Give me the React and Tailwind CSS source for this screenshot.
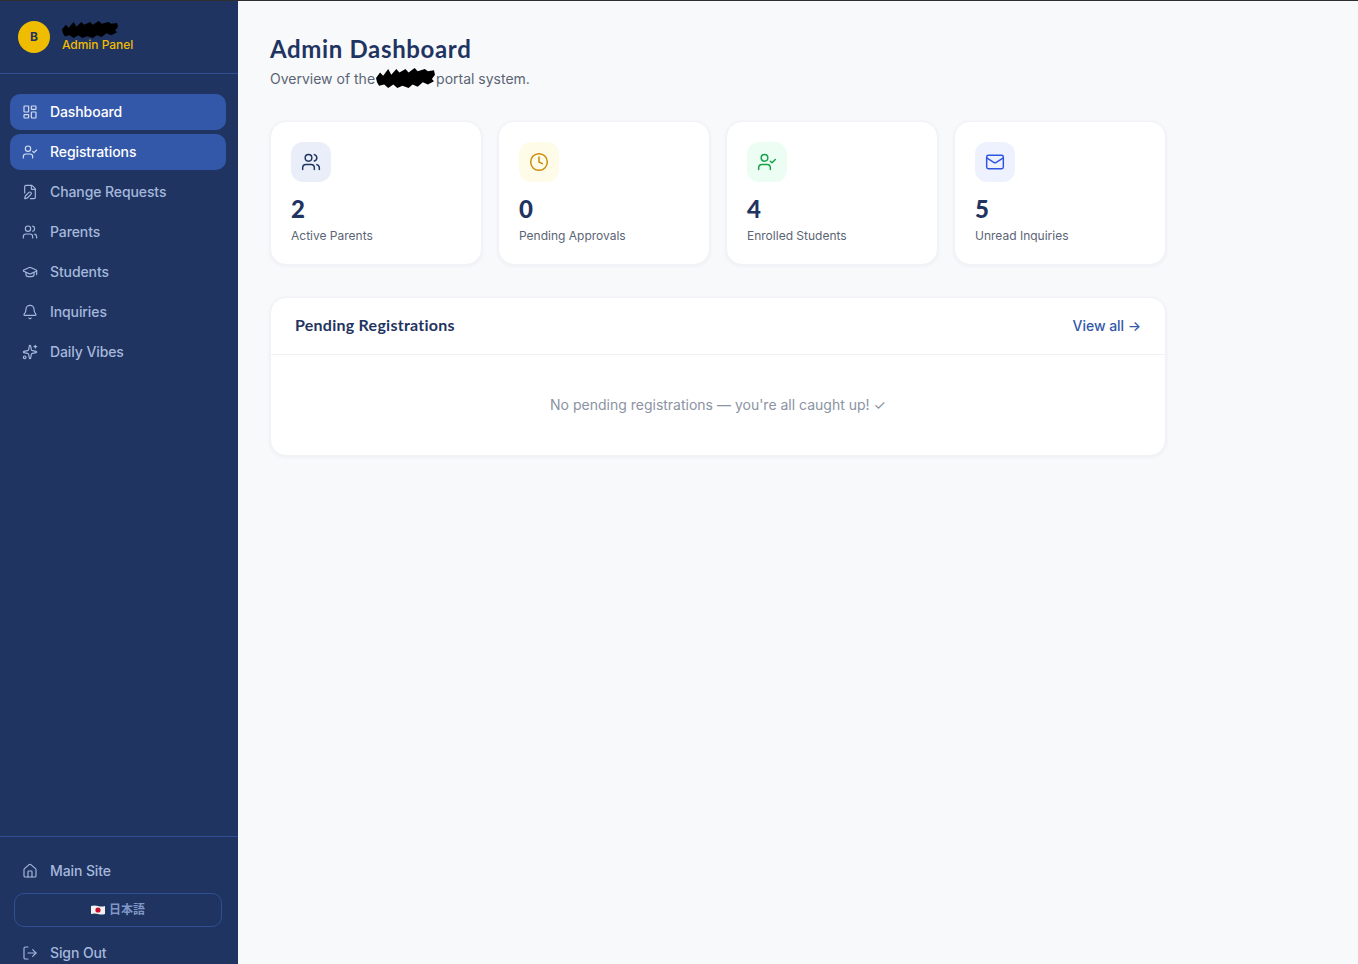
import { LayoutDashboard, UserCheck, FilePen, Users, GraduationCap, Bell, Sparkles, House, LogOut, Clock, Mail } from 'lucide-react';

const navItems = [
  { label: 'Dashboard', icon: LayoutDashboard, active: true },
  { label: 'Registrations', icon: UserCheck, active: true },
  { label: 'Change Requests', icon: FilePen },
  { label: 'Parents', icon: Users },
  { label: 'Students', icon: GraduationCap },
  { label: 'Inquiries', icon: Bell },
  { label: 'Daily Vibes', icon: Sparkles },
];

const SCRIBBLE = 'M1 9 L5 4 L8 7 L13 1 L16 6 L21 1 L24 4 L30 1 L33 4 L39 0 L42 3 L49 1 L52 3 L58 2 L59 6 L56 10 L58 12 L52 15 L47 13 L42 17 L37 15 L33 18 L27 16 L22 18 L18 15 L13 18 L9 15 L4 16 L2 13 Z';

const Scribble = ({ className }) => (
  <svg className={className} viewBox="0 0 60 19" preserveAspectRatio="none" fill="#000" aria-hidden="true">
    <path d={SCRIBBLE} />
  </svg>
);

const stats = [
  { value: '2', label: 'Active Parents', icon: Users, box: 'bg-[#e9eef8]', color: 'text-[#1f3461]' },
  { value: '0', label: 'Pending Approvals', icon: Clock, box: 'bg-[#fefce8]', color: 'text-[#ca8a04]' },
  { value: '4', label: 'Enrolled Students', icon: UserCheck, box: 'bg-[#ecfdf3]', color: 'text-[#16a34a]' },
  { value: '5', label: 'Unread Inquiries', icon: Mail, box: 'bg-[#eef2ff]', color: 'text-[#2f55e0]' },
];

const NavLink = ({ label, icon: Icon, active }) => (
  <a className={`flex h-9 shrink-0 items-center gap-3 rounded-[10px] px-3 text-sm font-medium tracking-[-0.1px] ${active ? 'bg-[#3358aa] text-white' : 'text-[#a5b8dc]'}`}>
    <Icon size={16} strokeWidth={1.75} className={active ? 'text-[#d5deef]' : 'text-[#a5b8dc]'} />
    {label}
  </a>
);

const JapanFlag = () => (
  <svg width="14" height="10" viewBox="0 0 14 10" aria-hidden="true">
    <path d="M0 1 Q3.5 0 7 1 T14 1 V9 Q10.5 10 7 9 T0 9 Z" fill="#f1f1f1" />
    <circle cx="7" cy="5" r="2.6" fill="#c8102e" />
  </svg>
);

const App = () => {
  return (
    <div className="flex h-screen overflow-hidden border-t border-[#2e2e2e] bg-[#f8f9fb] font-['Inter',sans-serif]">
      {/* Sidebar */}
      <aside className="flex w-[238px] shrink-0 flex-col bg-[#1f3461]">
        <div className="flex h-[73px] shrink-0 items-center gap-3 border-b border-[#2f4f94] px-[18px]">
          <div className="flex h-8 w-8 items-center justify-center rounded-full bg-[#f0bc00] text-xs font-bold text-[#1f3461]">B</div>
          <div>
            <Scribble className="ml-[-1px] h-[18px] w-[58px]" />
            <p className="mt-[-2px] text-xs leading-4 font-medium tracking-[-0.05px] text-[#f0bc00]">Admin Panel</p>
          </div>
        </div>

        <nav className="flex flex-1 flex-col gap-1 pt-5 pr-3 pl-[10px]">
          {navItems.map((item) => <NavLink key={item.label} {...item} />)}
        </nav>

        <div className="flex h-[128px] shrink-0 flex-col border-t border-[#2f4f94] pt-4 pr-3 pl-[10px]">
          <NavLink label="Main Site" icon={House} />
          <button className="mt-1 ml-1 flex h-[34px] w-[208px] shrink-0 items-center justify-center gap-1 rounded-[10px] border border-[#2f4f94] font-['Inter','Noto_Sans_CJK_JP',sans-serif] text-xs font-semibold text-[#7f97c6]">
            <JapanFlag />
            日本語
          </button>
          <div className="mt-2 shrink-0">
            <NavLink label="Sign Out" icon={LogOut} />
          </div>
        </div>
      </aside>

      {/* Main content */}
      <main className="flex-1 pt-8 pl-8">
        <div className="w-[896px]">
          <h1 className="font-['Lato',sans-serif] text-2xl leading-8 font-bold tracking-[0.65px] text-[#1f3461]">Admin Dashboard</h1>
          <p className="mt-1 flex text-sm leading-5 text-[#5b6475]">
            Overview of the
            <Scribble className="mt-[-1px] h-[21px] w-[61px]" />
            portal system.
          </p>

          <div className="mt-[32px] grid grid-cols-4 gap-4">
            {stats.map(({ value, label, icon: Icon, box, color }) => (
              <div key={label} className="h-[144px] rounded-2xl border border-[#f2f3f6] bg-white p-5 shadow-[0_1px_4px_rgba(20,30,60,0.06)]">
                <div className={`flex h-10 w-10 items-center justify-center rounded-xl ${box}`}>
                  <Icon size={20} strokeWidth={1.75} className={color} />
                </div>
                <p className="mt-[11px] font-['Lato',sans-serif] text-2xl leading-8 font-black text-[#1f3461]">{value}</p>
                <p className="mt-[3px] text-xs leading-4 text-[#5b6475]">{label}</p>
              </div>
            ))}
          </div>

          <section className="mt-8 rounded-2xl border border-[#f2f3f6] bg-white shadow-[0_1px_4px_rgba(20,30,60,0.06)]">
            <div className="flex h-[57px] items-center justify-between border-b border-[#f0f1f5] px-6">
              <h2 className="mt-[-2px] font-['Lato',sans-serif] text-base font-bold tracking-[0.25px] text-[#1f3461]">Pending Registrations</h2>
              <a className="text-sm font-medium tracking-[-0.05px] text-[#3358aa]">View all →</a>
            </div>
            <p className="py-10 text-center text-sm leading-5 text-[#8b93a3]">No pending registrations — you're all caught up! ✓</p>
          </section>
        </div>
      </main>
    </div>
  );
};

export default App;
